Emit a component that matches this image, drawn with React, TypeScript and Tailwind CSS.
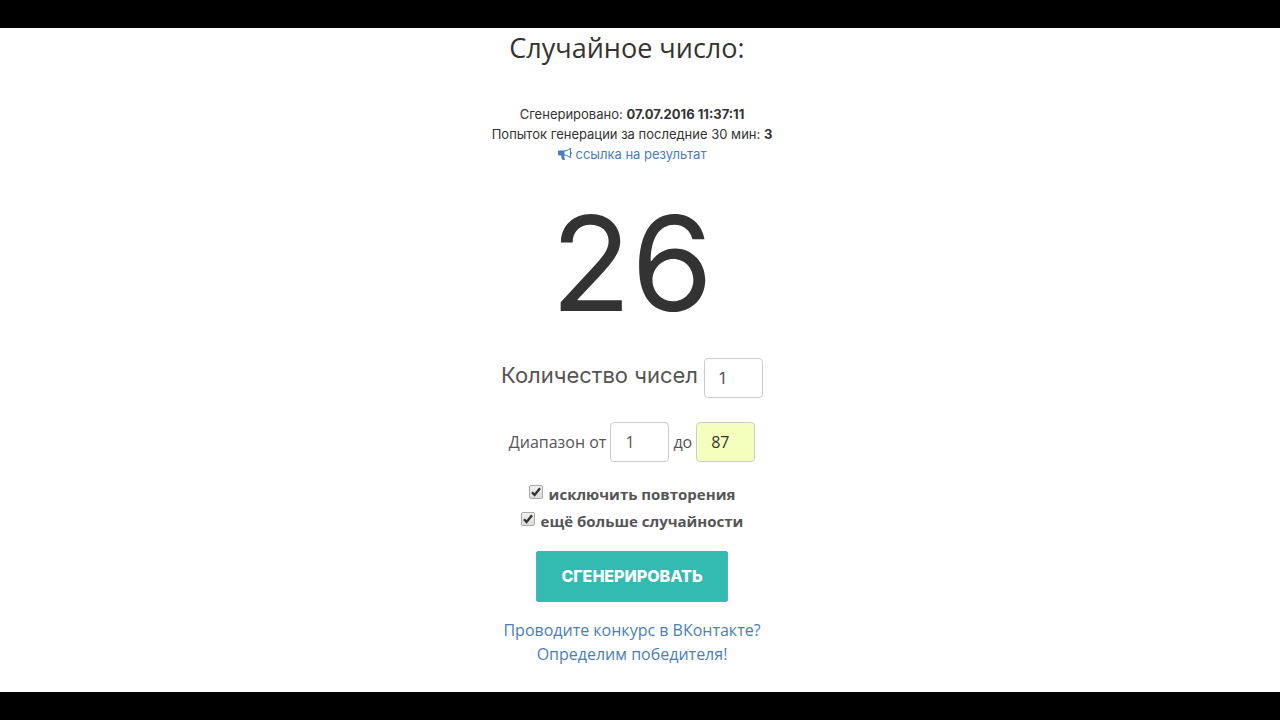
import { useState } from 'react';
import type { ChangeEvent } from 'react';

interface NumberFieldProps {
  id: string;
  label: string;
  value: string;
  onChange: (value: string) => void;
  labelClassName?: string;
  inputClassName?: string;
}

function NumberField({ id, label, value, onChange, labelClassName = '', inputClassName = 'bg-white' }: NumberFieldProps) {
  return (
    <>
      <label htmlFor={id} className={labelClassName}>
        {label}
      </label>
      <input
        id={id}
        type="text"
        inputMode="numeric"
        value={value}
        onChange={(e: ChangeEvent<HTMLInputElement>) => onChange(e.target.value)}
        className={`h-10 w-[59px] rounded border border-[#cccccc] px-3.5 text-base outline-none ${inputClassName}`}
      />
    </>
  );
}

interface OptionProps {
  label: string;
  checked: boolean;
  onChange: (checked: boolean) => void;
}

function Option({ label, checked, onChange }: OptionProps) {
  return (
    <label className="flex h-[27px] items-center gap-1.5 font-bold">
      <span className="relative mb-1.5 flex">
        <input
          type="checkbox"
          checked={checked}
          onChange={(e: ChangeEvent<HTMLInputElement>) => onChange(e.target.checked)}
          className="size-3.5 appearance-none rounded-xs border border-[#a8a8a8] bg-linear-to-b from-[#f0f0f0] to-[#dcdcdc]"
        />
        {checked && (
          <svg viewBox="0 0 14 14" className="pointer-events-none absolute inset-0 size-3.5">
            <path d="M3 7.2 L5.6 10 L11 3.2" fill="none" stroke="#333333" strokeWidth="2.4" />
          </svg>
        )}
      </span>
      {label}
    </label>
  );
}

export default function App() {
  const [count, setCount] = useState('1');
  const [from, setFrom] = useState('1');
  const [to, setTo] = useState('87');
  const [unique, setUnique] = useState(true);
  const [extraRandom, setExtraRandom] = useState(true);
  const [result, setResult] = useState(26);

  const generate = () => {
    const min = Number(from);
    const max = Number(to);
    setResult(min + Math.floor(Math.random() * (max - min + 1)));
  };

  return (
    <div className="min-h-screen border-y-28 border-black bg-white font-['Inter','Open_Sans',sans-serif] text-[#333333]">
      <main className="flex flex-col items-center pr-4 text-center">
        <h1 className="mt-1 pr-2.5 font-['Open_Sans',sans-serif] text-[27px] leading-8">Случайное число:</h1>

        {/* Result details */}
        <div className="mt-10 text-[13px] leading-5">
          <p>
            Сгенерировано: <b>07.07.2016 11:37:11</b>
          </p>
          <p>
            Попыток генерации за последние 30 мин: <b>3</b>
          </p>
          <a href="#result" className="inline-flex items-center gap-1 text-[#4a80b5]">
            {/* Megaphone */}
            <svg viewBox="0 0 14 14" className="size-3.5" fill="currentColor">
              <path d="M0 4.5 Q0 3.5 1 3.5 H5.5 C8.5 3.5 10.5 2.2 12 1 Q13 1 13 2 V5 Q14 5.2 14 6 Q14 6.8 13 7 V10 Q13 11 12 11 C10.8 10 9 8.9 6.8 8.6 C6 9 6 10 6.5 10.5 C6.2 11.2 6.5 11.7 7.3 12.3 C6.8 13.2 4.8 13.2 4 12.5 C3.7 11.2 3 10 3.3 8.5 H1 Q0 8.5 0 7.5 Z M12 2.3 C10.3 3.5 8.5 4.3 6.5 4.5 V7.5 C8.5 7.7 10.3 8.5 12 9.7 Z" fillRule="evenodd" />
            </svg>
            ссылка на результат
          </a>
        </div>

        <output className="mt-5.5 text-[132px] leading-[150px]">{result}</output>

        {/* Settings */}
        <div className="mt-5 flex items-center gap-1.5 text-[#555555]">
          <NumberField
            id="count"
            label="Количество чисел"
            value={count}
            onChange={setCount}
            labelClassName="pb-1.5 text-[22px]"
          />
        </div>
        <div className="mt-6 flex items-center gap-1 font-['Open_Sans',sans-serif] text-base text-[#555555]">
          <NumberField id="from" label="Диапазон от" value={from} onChange={setFrom} />
          <NumberField
            id="to"
            label="до"
            value={to}
            onChange={setTo}
            inputClassName="bg-[#f5ffbd] text-[#333333]"
          />
        </div>

        <div className="mt-[19px] flex flex-col items-center font-['Open_Sans',sans-serif] text-[15px] text-[#555555]">
          <Option label="исключить повторения" checked={unique} onChange={setUnique} />
          <Option label="ещё больше случайности" checked={extraRandom} onChange={setExtraRandom} />
        </div>

        <button
          type="button"
          onClick={generate}
          className="mt-4 rounded-xs border border-[#5aa9d0] bg-[#32bbb0] px-6 py-3 text-base leading-[25px] font-extrabold text-white"
        >
          СГЕНЕРИРОВАТЬ
        </button>

        <a href="#contest" className="mt-4 font-['Open_Sans',sans-serif] text-base leading-6 text-[#4a80b5]">
          Проводите конкурс в ВКонтакте?
          <br />
          Определим победителя!
        </a>
      </main>
    </div>
  );
}
